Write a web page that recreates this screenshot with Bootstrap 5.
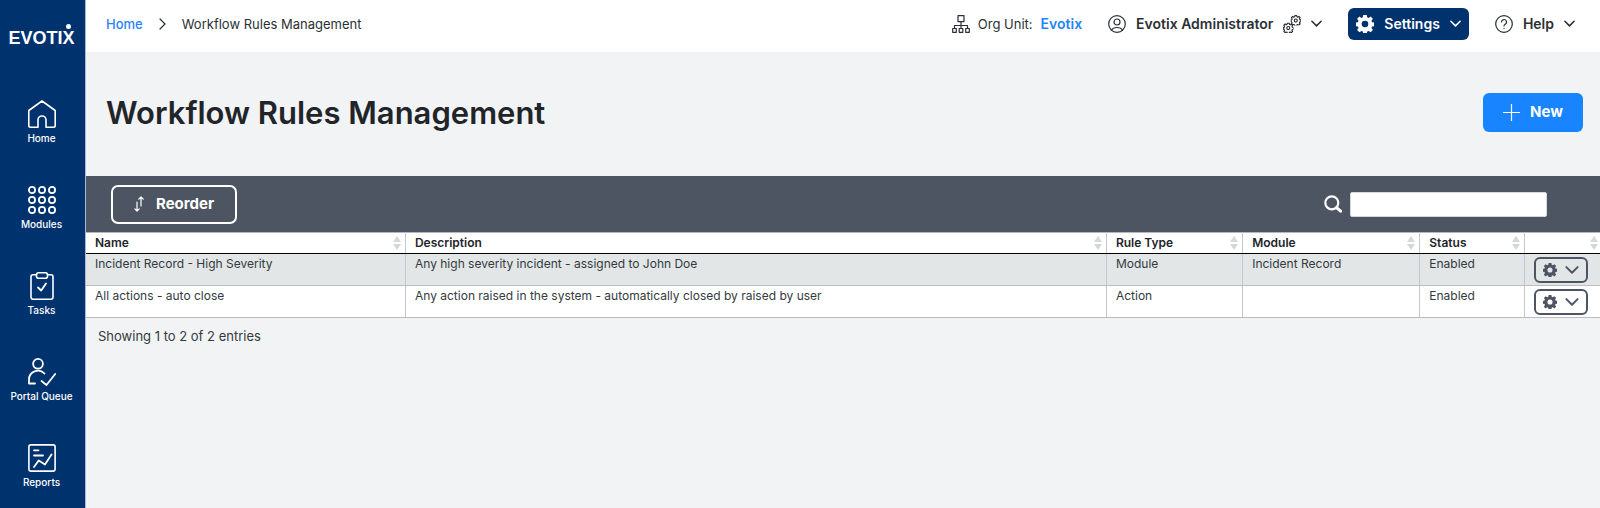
<!DOCTYPE html>
<html lang="en">
<head>
<meta charset="utf-8">
<meta name="viewport" content="width=device-width, initial-scale=1">
<title>Workflow Rules Management</title>
<link href="https://cdn.jsdelivr.net/npm/bootstrap@5.3.0/dist/css/bootstrap.min.css" rel="stylesheet">
<style>
  body { font-family: Inter, "Open Sans", sans-serif; font-size: 13px; line-height: 20px; color: #343a40; background: #f1f3f5; }
  a { text-decoration: none; color: #2684ff; }
  svg { display: block; flex: none; fill: none; stroke: currentColor; stroke-linecap: round; stroke-linejoin: round; }
  .side { width: 86px; background: #00326e; border-right: 1px solid #a9b9d3; color: #fff; padding: 22px 2px 0 0; }
  .brand { font: bold 18px/32px "Liberation Sans Narrow", "Liberation Sans", sans-serif; color: #fff; position: relative; height: 32px; margin-bottom: 46px; }
  .brand span { position: absolute; right: 4px; top: 2px; width: 5px; height: 5px; border-radius: 50%; background: #fff; }
  .side-links { gap: 40px; }
  .side-links a { color: #fff; font-size: 10px; line-height: 16px; font-weight: 500; gap: 2px; }
  .topbar { height: 52px; background: #fff; padding: 0 25px 4px 20px; color: #2b3035; }
  .crumb-home { font-weight: 500; }
  .top-actions { gap: 26px; }
  .topbar button { color: inherit; font-weight: 600; font-size: 14px; line-height: 20px; padding: 0; border: 0; gap: 10px; }
  .topbar .org-link { font-size: 14px; font-weight: 600; }
  .topbar .settings { background: #00326e; color: #fff; height: 32px; border-radius: 6px; padding: 0 8px; }
  .title-row { padding: 41px 17px 44px 20px; }
  h1 { font-size: 31px; line-height: 39px; font-weight: 600; color: #212529; margin: 0; }
  .new-btn { background: #1884ff; color: #fff; font-weight: 700; font-size: 15px; width: 100px; height: 39px; border-radius: 6px; padding: 0; gap: 10px; }
  .tools { background: #4d5563; height: 56px; padding: 0 53px 0 25px; color: #fff; }
  .reorder { border: 2px solid #fff; border-radius: 7px; color: #fff; font-weight: 700; font-size: 15px; width: 126px; height: 39px; padding: 0; gap: 12px; }
  .search { width: 197px; height: 25px; border: 1px solid #d4d7dc; border-radius: 2px; padding: 2px 6px; }
  .rules { table-layout: fixed; width: 100%; font-size: 12px; line-height: 20px; border-collapse: collapse; background: #fff; color: #343a40; }
  .rules th, .rules td { border-right: 1px solid #c4c7cb; vertical-align: top; padding: 0 8px 0 9px; }
  .rules th:last-child, .rules td:last-child { border-right: 0; padding-right: 2px; }
  .rules th { font-weight: 600; height: 21px; color: #212529; border-top: 1px solid #b4b8be; border-bottom: 1px solid #000; }
  .rules th svg { margin-right: -4px; color: #d5d7da; }
  .rules th:last-child svg { margin-right: 0; }
  .rules th:last-child div { height: 20px; }
  .rules td { height: 32px; border-bottom: 1px solid #b9bdc1; }
  .rules tr.odd td { background: #e2e6e6; }
  .act { border: 2px solid #4d5563; border-radius: 6px; color: #4d5563; width: 54px; height: 26px; padding: 0; gap: 8px; margin-top: 3px; }
  .entries { font-size: 13px; padding: 8px 12px; }
</style>
</head>
<body>
<svg width="0" height="0" class="position-absolute" aria-hidden="true">
  <symbol id="chev" viewBox="0 0 12 8"><path d="M1 1l5 5 5-5" stroke-width="1.700"/></symbol>
  <symbol id="gear" viewBox="0 0 18 18"><path fill="currentColor" stroke="none" fill-rule="evenodd" d="M7.200 0h3.600l.4 2.300 1.400.6 2-1.400 2.300 2.300-1.400 2 .6 1.400 2.300.4v3.600l-2.300.4-.6 1.400 1.400 2-2.300 2.300-2-1.400-1.400.6-.4 2.300H7.200l-.4-2.300-1.400-.6-2 1.400-2.300-2.300 1.400-2-.6-1.400L0 11.200V7.600l1.900-.4.6-1.400-1.400-2 2.300-2.300 2 1.400 1.400-.6zM9 5.700a3.300 3.300 0 1 0 0 6.600 3.300 3.300 0 1 0 0-6.600z"/></symbol>
  <symbol id="cog" viewBox="0 0 18 18"><path stroke-width="2" d="M7.400 1h3.200l.4 2 1.500.7 1.800-1.200 2.200 2.200-1.200 1.800.7 1.500 1.900.4v3.200l-2 .4-.6 1.500 1.200 1.800-2.200 2.200-1.800-1.200-1.500.6-.4 2H7.400l-.4-2-1.500-.6-1.800 1.200-2.200-2.200 1.200-1.800L2 12l-1-.4V8.400L2.100 8l.6-1.500-1.200-1.800 2.200-2.200 1.800 1.200L7 3z"/><circle cx="9" cy="9.500" r="2.600" stroke-width="2"/></symbol>
  <symbol id="sort" viewBox="0 0 8 14"><path fill="currentColor" stroke="none" d="M4 0l4 6H0zM4 14l4-6H0z"/></symbol>
</svg>
<div class="d-flex min-vh-100">
  <nav class="side d-flex flex-column align-items-center flex-shrink-0" aria-label="Main">
    <a href="#" class="brand">EVOTIX<span></span></a>
    <div class="side-links d-flex flex-column">
      <a href="#" class="d-flex flex-column align-items-center">
        <svg width="28" height="28" viewBox="0 0 28 28" stroke-width="1.600"><path d="M.8 10.500L14 1l13.200 9.500V25.500q0 1.700-1.700 1.700H18V20a4 4 0 0 0-8 0v7.200H2.500Q.8 27.200.8 25.500z"/></svg>Home</a>
      <a href="#" class="d-flex flex-column align-items-center">
        <svg width="28" height="28" viewBox="0 0 28 28" stroke-width="1.800"><circle cx="4" cy="4" r="3.100"/><circle cx="14" cy="4" r="3.100"/><circle cx="24" cy="4" r="3.100"/><circle cx="4" cy="14" r="3.100"/><circle cx="14" cy="14" r="3.100"/><circle cx="24" cy="14" r="3.100"/><circle cx="4" cy="24" r="3.100"/><circle cx="14" cy="24" r="3.100"/><circle cx="24" cy="24" r="3.100"/></svg>Modules</a>
      <a href="#" class="d-flex flex-column align-items-center">
        <svg width="28" height="28" viewBox="0 0 28 28" stroke-width="1.600"><path d="M8.500 2.800H5q-2 0-2 2V25q0 2.200 2 2.200h18q2 0 2-2.200V4.800q0-2-2-2h-3.500"/><rect x="8.500" y=".8" width="11" height="5.400" rx="2"/><path d="M10 15.500l3.200 3L18 11.500" stroke-width="1.800"/></svg>Tasks</a>
      <a href="#" class="d-flex flex-column align-items-center">
        <svg width="28" height="28" viewBox="0 0 28 28" stroke-width="1.800"><circle cx="10" cy="5.800" r="4.900"/><path d="M7 25.500H1V22a9 9 0 0 1 15.500-6.500M13.500 23l5 4 8.700-11"/></svg>Portal Queue</a>
      <a href="#" class="d-flex flex-column align-items-center">
        <svg width="28" height="28" viewBox="0 0 28 28" stroke-width="1.600"><rect x=".9" y=".9" width="26.200" height="26.200" rx="2"/><path d="M6 6.300h4.500M6 11.500h9M6 23l4.700-6.500 6.300 4L23.500 10.500" stroke-width="1.800"/></svg>Reports</a>
    </div>
  </nav>
  <div class="flex-grow-1 d-flex flex-column">
    <header class="topbar d-flex align-items-center">
      <a href="#" class="crumb-home">Home</a>
      <svg class="mx-3" width="7" height="12" viewBox="0 0 7 12" stroke-width="1.200"><path d="M1 1l5 5-5 5"/></svg>
      <span>Workflow Rules Management</span>
      <div class="top-actions d-flex align-items-center ms-auto">
        <div class="d-flex align-items-center gap-2">
          <svg width="18" height="18" viewBox="0 0 18 18" stroke-width="1.200"><path d="M6 .6h6v6H6zM9 6.600v4M2.500 13.500v-3h13v3M9 10.500v3M.7 13.500h3.600v3.800H.7zM7.200 13.500h3.600v3.800H7.200zM13.700 13.500h3.600v3.800h-3.600z"/></svg>
          <span>Org Unit:</span>
          <a href="#" class="org-link">Evotix</a>
        </div>
        <button type="button" class="btn d-flex align-items-center">
          <svg width="18" height="18" viewBox="0 0 18 18" stroke-width="1.200"><circle cx="9" cy="9" r="8.300"/><circle cx="9" cy="7" r="3"/><path d="M3.500 15q1.500-2.500 5.500-2.500t5.500 2.500"/></svg>
          Evotix Administrator
          <svg width="18" height="18" viewBox="0 0 36 36"><use href="#cog" x="15" y="0" width="21" height="21"/><use href="#cog" x="0" y="15" width="21" height="21"/></svg>
          <svg width="11" height="8"><use href="#chev"/></svg>
        </button>
        <button type="button" class="btn settings d-flex align-items-center">
          <svg width="18" height="18"><use href="#gear"/></svg>
          Settings
          <svg width="11" height="8"><use href="#chev"/></svg>
        </button>
        <button type="button" class="btn d-flex align-items-center">
          <svg width="18" height="18" viewBox="0 0 18 18" stroke-width="1.200"><circle cx="9" cy="9" r="8.300"/><path d="M6.500 7a2.500 2.500 0 1 1 3.700 2.200Q9 9.900 9 11M9 13.300v.2"/></svg>
          Help
          <svg width="11" height="8"><use href="#chev"/></svg>
        </button>
      </div>
    </header>
    <main>
      <div class="title-row d-flex align-items-center justify-content-between">
        <h1>Workflow Rules Management</h1>
        <button type="button" class="btn new-btn d-flex align-items-center justify-content-center">
          <svg width="17" height="17" viewBox="0 0 17 17" stroke-width="1.200"><path d="M8.500 0v17M0 8.500h17"/></svg>New</button>
      </div>
      <div class="tools d-flex align-items-center justify-content-between">
        <button type="button" class="btn reorder d-flex align-items-center justify-content-center">
          <svg width="10" height="16" viewBox="0 0 10 16" stroke-width="1.200"><path d="M3 6v9M.8 12.800L3 15l2.200-2.200M7 10V1M4.800 3.200L7 1l2.200 2.200"/></svg>Reorder</button>
        <label class="d-flex align-items-center gap-2">
          <svg width="18" height="18" viewBox="0 0 18 18" stroke-width="2.200"><circle cx="7.800" cy="7.800" r="6.500"/><path d="M12.800 12.800l3.800 3.400" stroke-width="3"/></svg>
          <input type="search" class="search" aria-label="Search rules">
        </label>
      </div>
      <table class="rules">
        <colgroup><col style="width:21.100%"><col style="width:46.300%"><col style="width:9%"><col style="width:11.700%"><col style="width:6.900%"><col style="width:5%"></colgroup>
        <thead>
          <tr>
            <th><div class="d-flex align-items-center justify-content-between">Name<svg width="8" height="14"><use href="#sort"/></svg></div></th>
            <th><div class="d-flex align-items-center justify-content-between">Description<svg width="8" height="14"><use href="#sort"/></svg></div></th>
            <th><div class="d-flex align-items-center justify-content-between">Rule Type<svg width="8" height="14"><use href="#sort"/></svg></div></th>
            <th><div class="d-flex align-items-center justify-content-between">Module<svg width="8" height="14"><use href="#sort"/></svg></div></th>
            <th><div class="d-flex align-items-center justify-content-between">Status<svg width="8" height="14"><use href="#sort"/></svg></div></th>
            <th><div class="d-flex align-items-center justify-content-end"><svg width="8" height="14"><use href="#sort"/></svg></div></th>
          </tr>
        </thead>
        <tbody>
          <tr class="odd">
            <td>Incident Record - High Severity</td><td>Any high severity incident - assigned to John Doe</td><td>Module</td><td>Incident Record</td><td>Enabled</td>
            <td><button type="button" class="btn act d-flex align-items-center justify-content-center" aria-label="Rule actions"><svg width="14" height="14"><use href="#gear"/></svg><svg width="14" height="9"><use href="#chev"/></svg></button></td>
          </tr>
          <tr>
            <td>All actions - auto close</td><td>Any action raised in the system - automatically closed by raised by user</td><td>Action</td><td></td><td>Enabled</td>
            <td><button type="button" class="btn act d-flex align-items-center justify-content-center" aria-label="Rule actions"><svg width="14" height="14"><use href="#gear"/></svg><svg width="14" height="9"><use href="#chev"/></svg></button></td>
          </tr>
        </tbody>
      </table>
      <div class="entries">Showing 1 to 2 of 2 entries</div>
    </main>
  </div>
</div>
<script src="https://cdn.jsdelivr.net/npm/bootstrap@5.3.0/dist/js/bootstrap.bundle.min.js"></script>
</body>
</html>
